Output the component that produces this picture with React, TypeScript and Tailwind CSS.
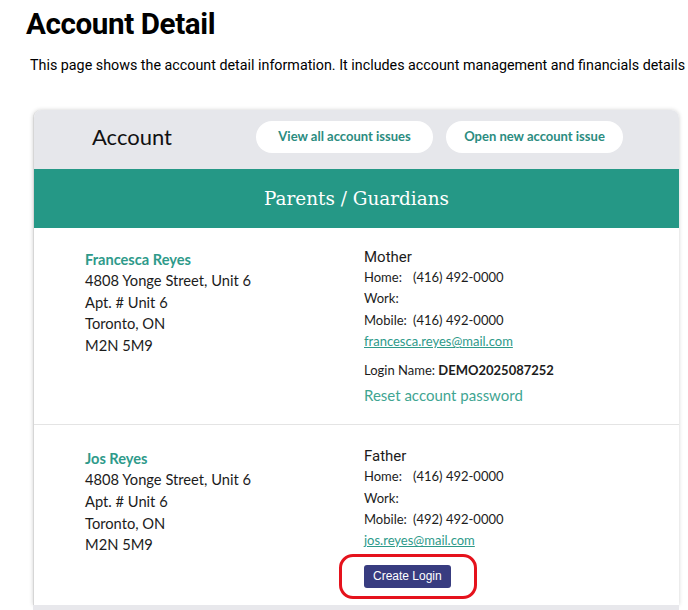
const nunito = { fontFamily: "Lato, 'Noto Sans', sans-serif" };

interface Guardian {
  name: string;
  relation: string;
  home: string;
  mobile: string;
  email: string;
  login?: string;
}

const guardians: Guardian[] = [
  {
    name: "Francesca Reyes",
    relation: "Mother",
    home: "(416) 492-0000",
    mobile: "(416) 492-0000",
    email: "francesca.reyes@mail.com",
    login: "DEMO2025087252",
  },
  {
    name: "Jos Reyes",
    relation: "Father",
    home: "(416) 492-0000",
    mobile: "(492) 492-0000",
    email: "jos.reyes@mail.com",
  },
];

function GuardianRow({ g, last }: { g: Guardian; last: boolean }) {
  return (
    <div
      className={`grid grid-cols-[330px_1fr] ${
        last ? "pt-[22px] pb-[17px]" : "border-b border-[#e4e4e4] pt-[20px] pb-[18px]"
      }`}
    >
      {/* Address */}
      <div className="pl-[51px] text-[14.7px] leading-[21.6px] text-[#1c1c1c]" style={nunito}>
        <div className="mt-[1px] text-[14.6px] font-bold leading-[21px] text-[#2e9a8a]">
          {g.name}
        </div>
        <div>4808 Yonge Street, Unit 6</div>
        <div>Apt. # Unit 6</div>
        <div>Toronto, ON</div>
        <div>M2N 5M9</div>
      </div>

      {/* Contact */}
      <div className="text-[13px] leading-[21.3px] text-[#1c1c1c]" style={nunito}>
        <div className="text-[15px] leading-[19px]" style={{ fontFamily: "Roboto, sans-serif" }}>
          {g.relation}
        </div>
        <div>
          <span className="inline-block w-[49px]">Home:</span>
          {g.home}
        </div>
        <div>Work:</div>
        <div>
          <span className="inline-block w-[49px]">Mobile:</span>
          {g.mobile}
        </div>
        <a href="#" className="block text-[#2e9a8a] underline">
          {g.email}
        </a>

        {g.login ? (
          <>
            <div className="mt-[8px]">
              Login Name: <span className="font-bold">{g.login}</span>
            </div>
            <a href="#" className="mt-[3px] block text-[15px] leading-[22px] text-[#3fa592]">
              Reset account password
            </a>
          </>
        ) : (
          <div className="relative mt-[13px] inline-block">
            <button
              className="h-[23px] rounded-[3px] bg-[#383c80] px-[9px] text-[12px] text-white"
              style={{ fontFamily: "'Liberation Sans', Arial, sans-serif" }}
            >
              Create Login
            </button>
            <div className="pointer-events-none absolute -left-[25px] -right-[26px] -top-[11px] -bottom-[11px] rounded-[14px] border-[3px] border-[#e5121c]" />
          </div>
        )}
      </div>
    </div>
  );
}

export default function App() {
  return (
    <div className="min-h-[610px] bg-white" style={{ fontFamily: "Roboto, sans-serif" }}>
      <h1 className="pl-[26px] pt-[5px] text-[29.6px] font-bold leading-[38px] tracking-[-0.4px] text-black">
        Account Detail
      </h1>
      <p className="mt-[12px] pl-[30px] text-[14.3px] leading-[20px] whitespace-nowrap text-black">
        This page shows the account detail information. It includes account management and financials details
      </p>

      <div className="ml-[33px] mt-[35px] w-[646px] overflow-hidden rounded-t-[8px] border-l border-[#d6d6d6] bg-white shadow-[0_0_4px_rgba(0,0,0,0.18)]">
        {/* Header */}
        <div className="flex h-[59px] items-start bg-[#e6e7eb] pt-[11px]">
          <div className="w-[222px] pl-[58px] text-[22px] leading-[32px] text-[#111]" style={nunito}>
            Account
          </div>
          <div className="flex gap-[13px]" style={nunito}>
            <button className="h-[32px] w-[177px] rounded-full bg-white text-[13px] font-bold text-[#2b8c7f]">
              View all account issues
            </button>
            <button className="h-[32px] w-[177px] rounded-full bg-white text-[13px] font-bold text-[#2b8c7f]">
              Open new account issue
            </button>
          </div>
        </div>

        {/* Section title */}
        <div
          className="flex h-[59px] items-center justify-center bg-[#259886] text-[18.4px] text-white"
          style={{ fontFamily: "'DejaVu Serif', serif" }}
        >
          Parents / Guardians
        </div>

        {guardians.map((g, i) => (
          <GuardianRow key={g.name} g={g} last={i === guardians.length - 1} />
        ))}
      </div>
      <div className="ml-[33px] h-[8px] w-[646px] bg-[#e8e8ec]" />
    </div>
  );
}
